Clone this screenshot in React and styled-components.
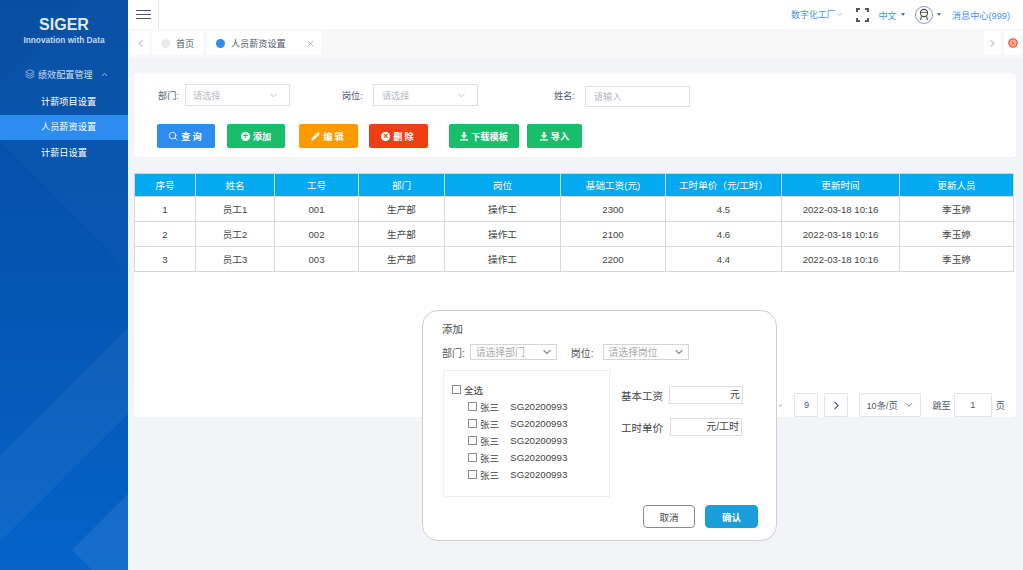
import React from "react";
import styled, { createGlobalStyle } from "styled-components";
import { ChevronDown, ChevronUp, ChevronLeft, ChevronRight, Search, Pencil, X, Layers } from "lucide-react";

const GlobalStyle = createGlobalStyle`
  html, body { margin: 0; padding: 0; height: 100%; }
  body { font-family: "Liberation Sans", "Noto Sans CJK SC", sans-serif; font-size: 10px; background: #f3f4f7; color: #333; overflow: hidden; }
  * { box-sizing: border-box; }
`;

const Shell = styled.div`
  position: relative;
  display: flex;
  width: 1023px;
  height: 570px;
  overflow: hidden;
`;

const Sidebar = styled.aside`
  position: relative;
  width: 128px;
  flex: none;
  padding-top: 16px;
  color: #fff;
  background:
    linear-gradient(135deg, rgba(0,0,0,.03) 0 60px, transparent 60px 322px, rgba(255,255,255,.045) 322px 383px, transparent 383px),
    linear-gradient(45deg, transparent 0 304px, rgba(255,255,255,.02) 304px),
    linear-gradient(180deg, #044ea4 0%, #0555b2 50%, #0563c9 100%);
  &::after {
    content: "";
    position: absolute;
    inset: 0;
    background: rgba(255,255,255,.07);
    clip-path: polygon(72px 550px, 128px 494px, 128px 570px, 92px 570px);
  }
`;

const Logo = styled.div`
  text-align: center;
  font-weight: bold;
  font-size: 16px;
  line-height: 18px;
  color: #dfe9f7;
`;

const Slogan = styled.div`
  text-align: center;
  font-weight: bold;
  font-size: 8.3px;
  line-height: 12px;
  color: #c6d8f0;
`;

const MenuGroup = styled.div`
  display: flex;
  align-items: center;
  height: 20px;
  margin-top: 18px;
  padding-left: 25px;
  gap: 3px;
  font-size: 9.1px;
  color: #cfdff3;
`;

const MenuItem = styled.div`
  height: ${p => p.$h || 25}px;
  margin-top: ${p => p.$gap || 0}px;
  padding-left: 41px;
  line-height: ${p => p.$h || 25}px;
  font-size: 9.2px;
  color: #fff;
  background: ${p => (p.$active ? "#2d8cf0" : "transparent")};
`;

const Main = styled.main`
  flex: 1;
  min-width: 0;
  display: flex;
  flex-direction: column;
`;

const Header = styled.header`
  display: flex;
  align-items: center;
  height: 29px;
  background: #fff;
`;

const Burger = styled.button`
  width: 31px;
  height: 29px;
  border: 0;
  border-right: 1px solid #e4e4e4;
  background: none;
  padding: 0 7px 0 8px;
  display: flex;
  flex-direction: column;
  justify-content: center;
  gap: 3px;
  span { display: block; height: 1px; background: #4d5568; }
`;

const HeaderRight = styled.div`
  margin-left: auto;
  display: flex;
  align-items: center;
  padding-right: 13px;
  font-size: 9.2px;
  color: #4a8ff0;
`;

const HeaderText = styled.span`
  display: flex;
  align-items: center;
  gap: ${p => p.$gap || 0}px;
  font-size: ${p => p.$size || 9.2}px;
  margin-left: ${p => p.$ml || 0}px;
`;

const Caret = styled.i`
  display: inline-block;
  width: 0;
  height: 0;
  margin-left: ${p => p.$ml || 0}px;
  border-left: 2.5px solid transparent;
  border-right: 2.5px solid transparent;
  border-top: 3px solid #55709c;
`;

const Avatar = styled.span`
  width: 18px;
  height: 18px;
  border-radius: 50%;
  border: 1px solid #8d97b5;
  display: flex;
  align-items: center;
  justify-content: center;
  margin-left: 10px;
`;

const TabBar = styled.div`
  display: flex;
  align-items: flex-start;
  height: 29px;
  padding: 2px 2px 0 4px;
  background: #f8f8f9;
`;

const TabArrow = styled.div`
  width: ${p => p.$w}px;
  height: 24px;
  margin-left: ${p => p.$ml || 0}px;
  background: #fff;
  display: flex;
  align-items: center;
  justify-content: center;
  color: #8a8f99;
`;

const Tab = styled.div`
  display: flex;
  align-items: center;
  width: ${p => p.$w}px;
  height: 24px;
  margin-left: ${p => p.$ml}px;
  padding-left: 9px;
  background: #fff;
  font-size: 9.1px;
  color: #515a6e;
`;

const Dot = styled.i`
  width: 9px;
  height: 9px;
  border-radius: 50%;
  margin-right: 6px;
  background: ${p => (p.$on ? "#2d8cf0" : "#e8eaec")};
`;

const TabSpacer = styled.div`
  flex: 1;
`;

const Content = styled.div`
  flex: 1;
  padding: 15px 7px 0 6px;
`;

const FilterCard = styled.section`
  height: 84px;
  padding-top: 11px;
  background: #fff;
  border-radius: 4px;
`;

const FilterRow = styled.div`
  display: flex;
  align-items: center;
  height: 22px;
`;

const Label = styled.span`
  font-size: 9.2px;
  color: #515a6e;
  margin-left: ${p => p.$ml}px;
  margin-right: ${p => p.$mr}px;
`;

const Select = styled.div`
  display: flex;
  align-items: center;
  justify-content: space-between;
  width: ${p => p.$w}px;
  height: ${p => p.$h || 22}px;
  padding: 0 ${p => p.$pr || 10}px 0 ${p => p.$pl || 7}px;
  border: 1px solid #dcdee2;
  font-size: 9.2px;
  color: #b5b8bf;
`;

const NameInput = styled(Select)`
  height: 21px;
  margin-top: 2px;
`;

const ButtonRow = styled.div`
  display: flex;
  height: 24px;
  margin-top: 18px;
  padding-left: 23px;
`;

const ActionButton = styled.button`
  display: flex;
  align-items: center;
  justify-content: center;
  gap: 3px;
  width: ${p => p.$w}px;
  margin-left: ${p => p.$ml || 0}px;
  height: 24px;
  border: 0;
  border-radius: 2px;
  padding: 0;
  font: bold 9.2px "Liberation Sans", "Noto Sans CJK SC", sans-serif;
  letter-spacing: ${p => p.$ls || 0}px;
  color: #fff;
  background: ${p => p.$bg};
`;

const RoundIcon = styled.i`
  width: 9px;
  height: 9px;
  border-radius: 50%;
  background: #fff;
  color: ${p => p.$bg};
  font: bold 9px/9px "Liberation Sans", sans-serif;
  letter-spacing: 0;
  text-align: center;
`;

const TableCard = styled.section`
  height: 244px;
  margin-top: 16px;
  background: #fff;
  border-radius: 4px;
`;

const Table = styled.table`
  width: 879px;
  border-collapse: collapse;
  table-layout: fixed;
  font-size: 9.6px;
  text-align: center;
  color: #444;
`;

const Th = styled.th`
  height: 23px;
  padding: 0;
  background: #03a9f1;
  color: #fff;
  font-weight: normal;
  border: 1px solid #c6dbe6;
  border-bottom: 0;
`;

const Td = styled.td`
  height: 25px;
  padding: 0;
  border: 1px solid #d8d8d8;
`;

const Pager = styled.div`
  display: flex;
  align-items: center;
  justify-content: flex-end;
  height: 24px;
  margin-top: 121px;
  padding-right: 11px;
  font-size: 9.2px;
  color: #515a6e;
`;

const PageBox = styled.div`
  display: flex;
  align-items: center;
  justify-content: ${p => (p.$between ? "space-between" : "center")};
  width: ${p => p.$w}px;
  height: 24px;
  margin-left: ${p => p.$ml || 0}px;
  padding: 0 ${p => (p.$between ? 6 : 0)}px;
  border: 1px solid #e3e5e8;
  border-radius: 1px;
`;

const PagerText = styled.span`
  margin-left: ${p => p.$ml}px;
`;

const Modal = styled.div`
  position: absolute;
  left: 422px;
  top: 310px;
  width: 355px;
  height: 231px;
  padding: 13px 18px 0 19px;
  background: #fff;
  border: 1px solid #cfcfcf;
  border-radius: 16px;
`;

const ModalTitle = styled.div`
  font-size: 10.4px;
  line-height: 12px;
  color: #444;
`;

const ModalFilters = styled.div`
  display: flex;
  align-items: center;
  height: 16px;
  margin-top: 8px;
  color: #555;
  font-size: 10px;
`;

const ModalSelect = styled(Select)`
  margin-left: ${p => p.$ml || 0}px;
  border-color: #d5d5d5;
  font-size: 9.8px;
  color: #aaa;
`;

const ModalLabel = styled.span`
  margin-left: ${p => p.$ml || 0}px;
`;

const ModalBody = styled.div`
  display: flex;
  margin-top: 10px;
`;

const CheckPanel = styled.div`
  width: 167px;
  height: 127px;
  margin: 0 11px 0 1px;
  padding: 10px 0 0 8px;
  border: 1px solid #eee;
`;

const CheckRow = styled.label`
  display: flex;
  align-items: center;
  height: 17px;
  padding-left: ${p => (p.$child ? 16 : 0)}px;
  font-size: 9.6px;
  color: #444;
`;

const Box = styled.i`
  width: 9px;
  height: 9px;
  margin-right: 3px;
  border: 1px solid #8c8c8c;
  background: #fff;
`;

const StaffCode = styled.span`
  margin-left: 11px;
  font-size: 9.7px;
`;

const SalaryCol = styled.div`
  padding-top: 16px;
`;

const SalaryRow = styled.div`
  display: flex;
  align-items: center;
  height: 18px;
  margin-bottom: 14px;
  font-size: 10.5px;
  color: #444;
`;

const SalaryInput = styled.div`
  width: ${p => p.$w}px;
  height: 18px;
  margin-left: ${p => p.$ml}px;
  padding-right: 2px;
  border: 1px solid #ddd;
  text-align: right;
  line-height: 16px;
  font-size: 10px;
`;

const ModalFooter = styled.div`
  display: flex;
  justify-content: flex-end;
  gap: 10px;
  margin-top: 8px;
`;

const ModalButton = styled.button`
  width: ${p => p.$w}px;
  height: 23px;
  padding: 0;
  border-radius: 4px;
  border: 1px solid ${p => (p.$primary ? "#1a9ed9" : "#8a8a8a")};
  background: ${p => (p.$primary ? "#1a9ed9" : "#fff")};
  color: ${p => (p.$primary ? "#fff" : "#444")};
  font: ${p => (p.$primary ? "bold " : "")}9.6px "Liberation Sans", "Noto Sans CJK SC", sans-serif;
`;

const PagerDot = styled.i`
  width: 3px;
  height: 3px;
  margin-right: 12px;
  border-radius: 50%;
  background: #d5d7db;
`;

// solid arrow over a bar, the lucide one is an outlined tray
const DownloadIcon = () => (
  <svg width="8" height="9" viewBox="0 0 10 11" fill="#fff">
    <path d="M3.5 0h3v4h2.5L5 8 1 4h2.5z" />
    <rect x="0" y="9" width="10" height="1.6" />
  </svg>
);

const FullscreenIcon = () => (
  <svg width="13" height="14" viewBox="0 0 13 14" fill="none" stroke="#4d5568" strokeWidth="2" style={{ marginLeft: 13 }}>
    <path d="M1 4V1h3M9 1h3v3M12 10v3H9M4 13H1v-3" />
  </svg>
);

const AvatarIcon = () => (
  <svg width="12" height="13" viewBox="0 0 12 13" fill="none" stroke="#444" strokeWidth="1.1">
    <circle cx="6" cy="5" r="3.6" />
    <path d="M2.6 4.4h6.8" strokeWidth=".8" />
    <path d="M3.4 8.4 2.6 12M8.6 8.4l.8 3.6" />
  </svg>
);

const CloseAllIcon = () => (
  <svg width="10" height="10" viewBox="0 0 10 10" fill="none">
    <circle cx="5" cy="5" r="4.2" fill="#f8b5a2" stroke="#ee5b36" strokeWidth="1.3" />
    <path d="M3.5 3.5l3 3M6.5 3.5l-3 3" stroke="#ee5b36" strokeWidth=".9" />
  </svg>
);

const columns = [
  ["序号", 61], ["姓名", 79], ["工号", 84], ["部门", 86], ["岗位", 116],
  ["基础工资(元)", 105], ["工时单价（元/工时）", 116], ["更新时间", 118], ["更新人员", 114],
];

const rows = [
  ["1", "员工1", "001", "生产部", "操作工", "2300", "4.5", "2022-03-18 10:16", "季玉婷"],
  ["2", "员工2", "002", "生产部", "操作工", "2100", "4.6", "2022-03-18 10:16", "季玉婷"],
  ["3", "员工3", "003", "生产部", "操作工", "2200", "4.4", "2022-03-18 10:16", "季玉婷"],
];

const App = () => (
  <Shell>
    <GlobalStyle />
    <Sidebar>
      <Logo>SIGER</Logo>
      <Slogan>Innovation with Data</Slogan>
      <MenuGroup>
        <Layers size={10} strokeWidth={1.5} />
        绩效配置管理
        <ChevronUp size={9} style={{ marginLeft: 4 }} />
      </MenuGroup>
      <MenuItem $gap={6}>计薪项目设置</MenuItem>
      <MenuItem $active>人员薪资设置</MenuItem>
      <MenuItem $h={26}>计薪日设置</MenuItem>
    </Sidebar>
    <Main>
      <Header>
        <Burger aria-label="menu"><span /><span /><span /></Burger>
        <HeaderRight>
          <HeaderText $size={8.9} $gap={1}>数字化工厂<ChevronDown size={7} /></HeaderText>
          <FullscreenIcon />
          <HeaderText $ml={9} $gap={3}>中文<Caret $ml={1} /></HeaderText>
          <Avatar><AvatarIcon /></Avatar>
          <Caret $ml={4} />
          <HeaderText $ml={11}>消息中心(999)</HeaderText>
        </HeaderRight>
      </Header>
      <TabBar>
        <TabArrow $w={17}><ChevronLeft size={11} /></TabArrow>
        <Tab $w={51} $ml={3}><Dot />首页</Tab>
        <Tab $w={114} $ml={4}>
          <Dot $on />人员薪资设置
          <X size={9} color="#999" style={{ marginLeft: 20 }} />
        </Tab>
        <TabSpacer />
        <TabArrow $w={17}><ChevronRight size={11} /></TabArrow>
        <TabArrow $w={17} $ml={3}><CloseAllIcon /></TabArrow>
      </TabBar>
      <Content>
        <FilterCard>
          <FilterRow>
            <Label $ml={24} $mr={6}>部门:</Label>
            <Select $w={105}>请选择<ChevronDown size={11} color="#b5b8bf" /></Select>
            <Label $ml={52} $mr={10}>岗位:</Label>
            <Select $w={105} $pl={8}>请选择<ChevronDown size={11} color="#b5b8bf" /></Select>
            <Label $ml={76} $mr={10}>姓名:</Label>
            <NameInput $w={105} $pl={8}>请输入</NameInput>
          </FilterRow>
          <ButtonRow>
            <ActionButton $w={58} $bg="#2d8cf0" $ls={2}><Search size={10} />查询</ActionButton>
            <ActionButton $w={58} $ml={12} $bg="#19be6b"><RoundIcon $bg="#19be6b">+</RoundIcon>添加</ActionButton>
            <ActionButton $w={59} $ml={14} $bg="#ff9900" $ls={2}><Pencil size={9} fill="#fff" />编辑</ActionButton>
            <ActionButton $w={59} $ml={11} $bg="#f03e14" $ls={2}><RoundIcon $bg="#f03e14">×</RoundIcon>删除</ActionButton>
            <ActionButton $w={70} $ml={21} $bg="#19be6b"><DownloadIcon />下载模板</ActionButton>
            <ActionButton $w={55} $ml={8} $bg="#19be6b"><DownloadIcon />导入</ActionButton>
          </ButtonRow>
        </FilterCard>
        <TableCard>
          <Table>
            <colgroup>
              {columns.map(([name, w]) => <col key={name} style={{ width: w }} />)}
            </colgroup>
            <thead>
              <tr>{columns.map(([name]) => <Th key={name}>{name}</Th>)}</tr>
            </thead>
            <tbody>
              {rows.map(row => (
                <tr key={row[0]}>
                  {row.map((cell, i) => <Td key={i}>{cell}</Td>)}
                </tr>
              ))}
            </tbody>
          </Table>
          <Pager>
            <PagerDot />
            <PageBox $w={24}>9</PageBox>
            <PageBox $w={24} $ml={6}><ChevronRight size={13} /></PageBox>
            <PageBox $w={62} $ml={11} $between>10条/页<ChevronDown size={10} /></PageBox>
            <PagerText $ml={11}>跳至</PagerText>
            <PageBox $w={38} $ml={3}>1</PageBox>
            <PagerText $ml={4}>页</PagerText>
          </Pager>
        </TableCard>
      </Content>
    </Main>
    <Modal>
      <ModalTitle>添加</ModalTitle>
      <ModalFilters>
        部门:
        <ModalSelect $w={87} $h={16} $ml={5} $pl={5} $pr={3}>请选择部门<ChevronDown size={12} strokeWidth={3} color="#999" /></ModalSelect>
        <ModalLabel $ml={14}>岗位:</ModalLabel>
        <ModalSelect $w={86} $h={16} $ml={9} $pl={5} $pr={3}>请选择岗位<ChevronDown size={12} strokeWidth={3} color="#999" /></ModalSelect>
      </ModalFilters>
      <ModalBody>
        <CheckPanel>
          <CheckRow><Box />全选</CheckRow>
          {[0, 1, 2, 3, 4].map(i => (
            <CheckRow $child key={i}><Box />张三<StaffCode>SG20200993</StaffCode></CheckRow>
          ))}
        </CheckPanel>
        <SalaryCol>
          <SalaryRow>基本工资<SalaryInput $w={74} $ml={6}>元</SalaryInput></SalaryRow>
          <SalaryRow>工时单价<SalaryInput $w={72} $ml={7}>元/工时</SalaryInput></SalaryRow>
        </SalaryCol>
      </ModalBody>
      <ModalFooter>
        <ModalButton $w={52}>取消</ModalButton>
        <ModalButton $w={53} $primary>确认</ModalButton>
      </ModalFooter>
    </Modal>
  </Shell>
);

export default App;
